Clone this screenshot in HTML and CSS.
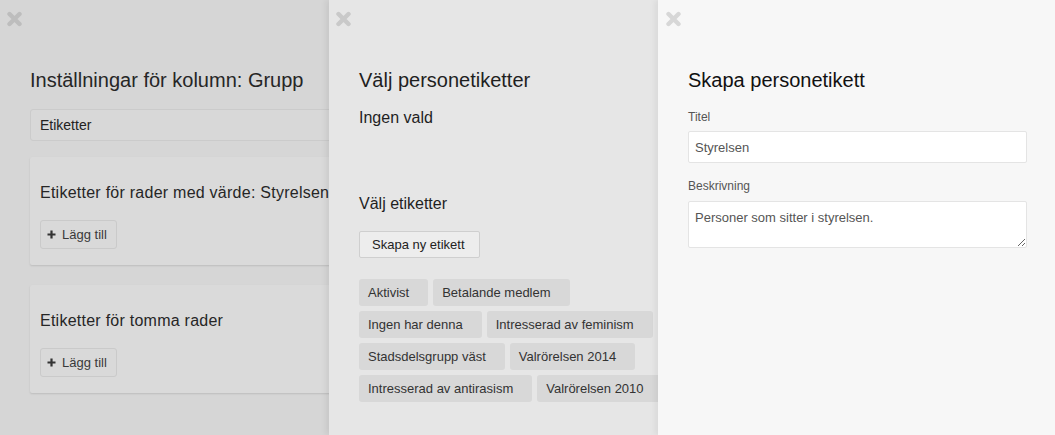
FILE: index.html
```html
<!DOCTYPE html>
<html lang="sv">
<head>
<meta charset="utf-8">
<title>Personetiketter</title>
<link rel="stylesheet" href="styles.css">
</head>
<body>
<div class="stack">
  <section class="panel panel-1">
    <svg class="close" width="17" height="16" viewBox="0 0 17 16"><path d="M3.5 3 L13.5 13 M13.5 3 L3.5 13"/></svg>
    <div class="body body-wide">
      <h1 class="title">Inställningar för kolumn: Grupp</h1>
      <div class="select">Etiketter</div>
      <div class="card">
        <h3 class="card-title">Etiketter för rader med värde: Styrelsen</h3>
        <span class="add-btn"><svg class="plus" width="9" height="9" viewBox="0 0 9 9"><path d="M4.5 0.5 V8.5 M0.5 4.5 H8.5"/></svg>Lägg till</span>
      </div>
      <div class="card card-2">
        <h3 class="card-title">Etiketter för tomma rader</h3>
        <span class="add-btn"><svg class="plus" width="9" height="9" viewBox="0 0 9 9"><path d="M4.5 0.5 V8.5 M0.5 4.5 H8.5"/></svg>Lägg till</span>
      </div>
    </div>
  </section>
  <section class="panel panel-2">
    <svg class="close" width="17" height="16" viewBox="0 0 17 16"><path d="M3.5 3 L13.5 13 M13.5 3 L3.5 13"/></svg>
    <div class="body">
      <h1 class="title">Välj personetiketter</h1>
      <p class="none">Ingen vald</p>
      <h2 class="sub">Välj etiketter</h2>
      <span class="new-btn">Skapa ny etikett</span>
      <div class="tags">
        <span class="tag">Aktivist</span>
        <span class="tag">Betalande medlem</span>
        <span class="tag">Ingen har denna</span>
        <span class="tag">Intresserad av feminism</span>
        <span class="tag">Stadsdelsgrupp väst</span>
        <span class="tag">Valrörelsen 2014</span>
        <span class="tag">Intresserad av antirasism</span>
        <span class="tag">Valrörelsen 2010</span>
      </div>
    </div>
  </section>
  <section class="panel panel-3">
    <svg class="close" width="17" height="16" viewBox="0 0 17 16"><path d="M3.5 3 L13.5 13 M13.5 3 L3.5 13"/></svg>
    <div class="body">
      <h1 class="title">Skapa personetikett</h1>
      <label class="label" for="titel">Titel</label>
      <input id="titel" class="field" type="text" value="Styrelsen">
      <label class="label label-2" for="beskr">Beskrivning</label>
      <textarea id="beskr" class="field area">Personer som sitter i styrelsen.</textarea>
    </div>
  </section>
</div>
</body>
</html>
```

FILE: styles.css
```css
* { box-sizing: border-box; }

html, body {
  margin: 0;
  padding: 0;
  height: 100%;
}

body {
  font-family: "Liberation Sans", Arial, Helvetica, sans-serif;
  color: #222;
  overflow: hidden;
}

.stack {
  display: flex;
  height: 435px;
  width: 1055px;
}

.panel {
  flex: none;
  height: 100%;
  overflow: hidden;
  padding: 11px 0 0 6px;
}

.panel-1 {
  width: 329px;
  background: #d6d6d6;
  color: #262626;
}

.panel-2 {
  width: 329px;
  background: #e6e6e6;
  box-shadow: -3px 0 6px rgba(0, 0, 0, 0.07);
  color: #1f1f1f;
}

.panel-3 {
  flex: 1 1 auto;
  background: #f7f7f7;
  box-shadow: -3px 0 6px rgba(0, 0, 0, 0.06);
  padding-left: 7px;
  color: #111;
}

.close {
  display: block;
  fill: none;
  stroke-width: 4.4;
  stroke-linecap: round;
}
.panel-1 .close { stroke: #bdbdbd; }
.panel-2 .close { stroke: #c9c9c9; }
.panel-3 .close { stroke: #d7d7d7; }

.body {
  padding-left: 24px;
}
.panel-3 .body { padding-left: 23px; padding-right: 28px; }

.body-wide {
  width: 560px;
}

.title {
  margin: 41px 0 0;
  font-size: 20px;
  line-height: 24px;
  font-weight: normal;
}

/* Panel 1 */
.select {
  margin-top: 17px;
  height: 32px;
  line-height: 30px;
  padding: 0 9px;
  font-size: 14px;
  border: 1px solid #cbcbcb;
  border-radius: 3px;
  background: #d8d8d8;
  color: #222;
}

.card {
  margin-top: 16px;
  background: #dadada;
  border-radius: 2px;
  box-shadow: 0 1px 2px rgba(0, 0, 0, 0.12);
  padding: 26px 10px 16px;
}
.card-2 { margin-top: 20px; }

.card-title {
  margin: 0 0 17px;
  font-size: 16px;
  line-height: 20px;
  font-weight: normal;
  white-space: nowrap;
  letter-spacing: 0.25px;
}

.add-btn {
  display: inline-flex;
  align-items: center;
  height: 29px;
  padding: 0 9px 0 6px;
  border: 1px solid #cacaca;
  border-radius: 3px;
  background: #d9d9d9;
  font-size: 13px;
  color: #3a3a3a;
  gap: 6px;
}

.plus {
  fill: none;
  stroke: #333;
  stroke-width: 2.2;
}

/* Panel 2 */
.none {
  margin: 16px 0 0;
  font-size: 16px;
  line-height: 20px;
}

.sub {
  margin: 66px 0 0;
  font-size: 16px;
  line-height: 20px;
  font-weight: normal;
}

.new-btn {
  display: inline-block;
  margin-top: 17px;
  height: 27px;
  line-height: 25px;
  padding: 0 14px 0 12px;
  border: 1px solid #cfcfcf;
  border-radius: 2px;
  background: #ededed;
  font-size: 13px;
  color: #222;
}

.tags {
  margin-top: 21px;
  width: 325px;
  display: flex;
  flex-wrap: wrap;
  gap: 5px;
}

.tag {
  flex: none;
  height: 27px;
  line-height: 26px;
  padding: 1px 19px 0 9px;
  border-radius: 3px;
  background: #d8d8d8;
  font-size: 13px;
  color: #333;
  white-space: nowrap;
}

/* Panel 3 */
.label {
  display: block;
  margin-top: 17px;
  font-size: 12px;
  line-height: 16px;
  color: #555;
  margin-bottom: 6px;
}
.label-2 {
  margin-top: 15px;
  margin-bottom: 7px;
}

.field {
  display: block;
  width: 100%;
  height: 32px;
  margin: 0;
  padding: 0 6px;
  border: 1px solid #e4e4e4;
  border-radius: 2px;
  background: #fff;
  font-family: "Liberation Sans", Arial, Helvetica, sans-serif;
  font-size: 13px;
  color: #555;
  outline: none;
}

.area {
  height: 47px;
  padding: 7px 6px 0;
  line-height: 18px;
  resize: vertical;
}
```
